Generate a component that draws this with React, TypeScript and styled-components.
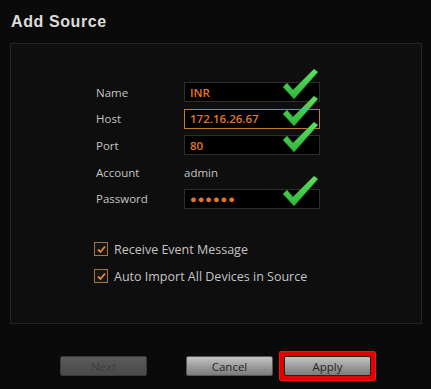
import styled, { createGlobalStyle } from 'styled-components';

const Global = createGlobalStyle`
  html, body { margin: 0; padding: 0; background: #0a0a0a; }
`;

const Page = styled.div`
  width: 431px;
  height: 389px;
  background: #0a0a0a;
  font-family: "Open Sans", "Noto Sans", sans-serif;
  display: flex;
  flex-direction: column;
  box-sizing: border-box;
  overflow: hidden;
`;

const Title = styled.div`
  font-family: "Liberation Sans", Arial, sans-serif;
  font-weight: bold;
  font-size: 16px;
  letter-spacing: 0.6px;
  color: #dcdcdc;
  padding: 13px 0 0 11px;
  height: 31px;
  box-sizing: border-box;
`;

const Panel = styled.div`
  margin: 12px 9px 0 10px;
  height: 281px;
  background: #0e0e0e;
  border: 1px solid #232323;
  box-sizing: border-box;
  padding: 38px 0 0 85px;
`;

const Form = styled.div`
  display: grid;
  grid-template-columns: 88px 136px;
  grid-auto-rows: 20px;
  row-gap: 6.7px;
  align-items: center;
`;

const Label = styled.div`
  font-size: 11.5px;
  color: #c4c4c4;
`;

const Value = styled.div`
  font-size: 11.5px;
  color: #c4c4c4;
`;

const Field = styled.div<{ $focus?: boolean }>`
  position: relative;
  height: 20px;
  box-sizing: border-box;
  background: #000;
  border: 1px solid ${p => (p.$focus ? '#c8782c' : '#2e2e2e')};
  color: #e2772a;
  font-size: 11.5px;
  font-weight: 600;
  padding-left: 5px;
  display: flex;
  align-items: center;
`;

const Dots = styled.span`
  letter-spacing: 1px;
  font-size: 11px;
`;

const Tick = styled.svg`
  position: absolute;
  right: 0;
  top: -16px;
  width: 38px;
  height: 34px;
  pointer-events: none;
`;

const Options = styled.div`
  margin-top: 32px;
  display: flex;
  flex-direction: column;
  gap: 10px;
`;

const Option = styled.label`
  display: flex;
  align-items: center;
  gap: 6px;
  font-size: 12.5px;
  line-height: 17px;
  color: #c4c4c4;
  margin-left: -2px;
`;

const Box = styled.span`
  width: 14px;
  height: 14px;
  box-sizing: border-box;
  border: 1px solid #9c7650;
  background: #1a1410;
  display: flex;
  align-items: center;
  justify-content: center;
`;

const Footer = styled.div`
  display: flex;
  padding: 27px 0 0 60px;
  align-items: center;
  gap: 39px;
`;

const Group = styled.div`
  display: flex;
  align-items: center;
`;

const Button = styled.div<{ $disabled?: boolean }>`
  width: 87px;
  height: 20px;
  box-sizing: border-box;
  border-radius: 2px;
  border: 1px solid ${p => (p.$disabled ? '#3a3a3a' : '#555')};
  background: ${p =>
    p.$disabled
      ? 'linear-gradient(#5a5a5a, #4a4a4a)'
      : 'linear-gradient(#c4c4c4, #9a9a9a 55%, #7c7c7c)'};
  color: ${p => (p.$disabled ? '#3c3c3c' : '#262626')};
  font-size: 11.5px;
  display: flex;
  align-items: center;
  justify-content: center;
`;

const Highlight = styled.div`
  margin-left: 6px;
  padding: 4px;
  border: 1px solid #ff1010;
  background: #e00000;
  border-radius: 2px;
  display: flex;
  & > div { border-color: #222; }
`;

const CheckIcon = () => (
  <Tick viewBox="0 0 38 34">
    <defs>
      <linearGradient id="tg" x1="0" y1="0" x2="0" y2="1">
        <stop offset="0" stopColor="#62e062" />
        <stop offset="1" stopColor="#2fb53a" />
      </linearGradient>
    </defs>
    <path
      d="M2 20 L6 16 L12 23 L33 2 L37 5 L13 32 Z"
      fill="url(#tg)"
      stroke="#1f8a2a"
      strokeWidth="0.6"
      strokeLinejoin="round"
    />
  </Tick>
);

const SmallCheck = () => (
  <svg width="9" height="9" viewBox="0 0 9 9">
    <path d="M1 4.5 L3.5 7 L8 1.5" fill="none" stroke="#e08a3a" strokeWidth="1.8" />
  </svg>
);

export default function App() {
  return (
    <Page>
      <Global />
      <Title>Add Source</Title>
      <Panel>
        <Form>
          <Label>Name</Label>
          <Field>INR<CheckIcon /></Field>
          <Label>Host</Label>
          <Field $focus>172.16.26.67<CheckIcon /></Field>
          <Label>Port</Label>
          <Field>80<CheckIcon /></Field>
          <Label>Account</Label>
          <Value>admin</Value>
          <Label>Password</Label>
          <Field><Dots>●●●●●●</Dots><CheckIcon /></Field>
        </Form>
        <Options>
          <Option><Box><SmallCheck /></Box>Receive Event Message</Option>
          <Option><Box><SmallCheck /></Box>Auto Import All Devices in Source</Option>
        </Options>
      </Panel>
      <Footer>
        <Button $disabled>Next</Button>
        <Group>
          <Button>Cancel</Button>
          <Highlight><Button>Apply</Button></Highlight>
        </Group>
      </Footer>
    </Page>
  );
}
